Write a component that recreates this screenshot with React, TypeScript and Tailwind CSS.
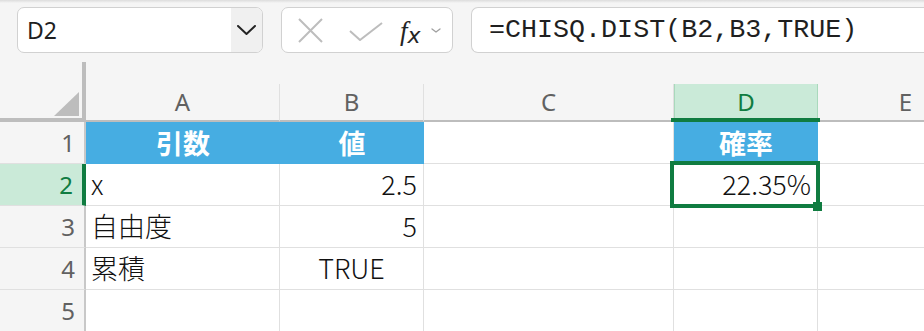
const UI_FONT = "font-['Noto_Sans','Open_Sans',sans-serif]";
const CELL_FONT = "font-['Noto_Sans_CJK_JP','Noto_Sans',sans-serif]";

type Cell = {
  text?: string;
  align?: 'left' | 'right' | 'center';
  header?: boolean;
};

const COLS = [
  { id: 'A', w: 'w-[194px] shrink-0' },
  { id: 'B', w: 'w-[144px] shrink-0' },
  { id: 'C', w: 'w-[250px] shrink-0' },
  { id: 'D', w: 'w-[144px] shrink-0' },
  { id: 'E', w: 'w-[176px] shrink-0' },
];

const ROWS: Cell[][] = [
  [{ text: '引数', align: 'center', header: true }, { text: '値', align: 'center', header: true }, {}, { text: '確率', align: 'center', header: true }, {}],
  [{ text: 'x' }, { text: '2.5', align: 'right' }, {}, { text: '22.35%', align: 'right' }, {}],
  [{ text: '自由度' }, { text: '5', align: 'right' }, {}, {}, {}],
  [{ text: '累積' }, { text: 'TRUE', align: 'center' }, {}, {}, {}],
  [{}, {}, {}, {}, {}],
];

function Chevron({ w, h, color, sw }: { w: number; h: number; color: string; sw: number }) {
  return (
    <svg width={w} height={h} viewBox={`0 0 ${w} ${h}`} fill="none">
      <polyline points={`1,1 ${w / 2},${h - 1} ${w - 1},1`} stroke={color} strokeWidth={sw} strokeLinecap="round" strokeLinejoin="round" />
    </svg>
  );
}

function Toolbar() {
  return (
    <div className="relative h-[62px] bg-[#f5f5f5] flex items-start pt-[7px] pl-[17px]">
      <div className="absolute top-0 left-0 right-0 h-[3px] bg-gradient-to-b from-[#dcdcdc] to-[#f5f5f5]" />
      {/* name box */}
      <div className="w-[246px] h-[46px] rounded-[7px] border-[1.5px] border-[#d1d1d1] bg-white flex overflow-hidden">
        <div className={`flex-1 flex items-center pl-[9px] text-[23px] text-[#1f1f1f] ${UI_FONT}`}>D2</div>
        <div className="w-[31px] bg-[#f0f0f0] flex items-center justify-center">
          <Chevron w={19} h={10} color="#242424" sw={2} />
        </div>
      </div>
      {/* cancel / enter / fx */}
      <div className="ml-[18px] w-[172px] h-[46px] rounded-[7px] border-[1.5px] border-[#d1d1d1] bg-white flex items-center">
        <svg className="ml-[16px]" width="25" height="25" viewBox="0 0 25 25" fill="none">
          <path d="M1 1 L24 24 M24 1 L1 24" stroke="#bdbdbd" strokeWidth="2" />
        </svg>
        <svg className="ml-[26px] mt-[2px]" width="34" height="19" viewBox="0 0 34 19" fill="none">
          <path d="M1 9 L11 18 L33 1" stroke="#bdbdbd" strokeWidth="2" />
        </svg>
        <span className="ml-[17px] mt-[2px] text-[27px] leading-none text-[#242424] italic font-['Liberation_Serif',serif]">
          f<span className="text-[22px] relative top-[3px] font-['DejaVu_Sans',sans-serif] font-light">x</span>
        </span>
        <div className="ml-[10px]">
          <Chevron w={10} h={5} color="#a0a0a0" sw={1.3} />
        </div>
      </div>
      {/* formula bar */}
      <div className="ml-[18px] flex-1 h-[46px] rounded-l-[7px] border-[1.5px] border-r-0 border-[#d1d1d1] bg-white flex items-center pl-[17px]">
        <span className="text-[26.7px] leading-none text-[#1f1f1f] font-['Liberation_Mono',monospace]">
          =CHISQ.DIST(B2,B3,TRUE)
        </span>
      </div>
    </div>
  );
}

function ColumnHeaders() {
  return (
    <div className="flex h-[60px] bg-[#f5f5f5]">
      <div className="relative w-[86px] shrink-0 h-full border-r-[4px] border-b-[4px] border-[#bdbdbd]">
        <svg className="absolute left-[54px] top-[30px]" width="25" height="24" viewBox="0 0 25 24">
          <polygon points="25,0 25,24 0,24" fill="#bdbdbd" />
        </svg>
      </div>
      {COLS.map((c) => {
        const sel = c.id === 'D';
        return (
          <div key={c.id} className={`${c.w} h-full flex flex-col`}>
            <div className="h-[22px]" />
            <div
              className={`relative flex-1 flex items-center justify-center text-[24px] ${UI_FONT} border-b-[2px] border-[#bdbdbd] border-r ${
                sel ? 'bg-[#caead8] text-[#107c41] border-r-[#a9d9bc] border-l border-l-[#a9d9bc]' : 'text-[#616161] border-r-[#e0e0e0]'
              }`}
            >
              {c.id}
              {sel && <div className="absolute z-10 left-[-4px] right-[-3px] bottom-[-2px] h-[4px] bg-[#107c41]" />}
            </div>
          </div>
        );
      })}
    </div>
  );
}

function Row({ n, cells }: { n: number; cells: Cell[] }) {
  const rowSel = n === 2;
  return (
    <div className="flex h-[42px]">
      <div
        className={`w-[86px] shrink-0 flex items-center justify-end pr-[9px] text-[24px] ${UI_FONT} border-b border-b-[#e0e0e0] ${
          rowSel
            ? 'bg-[#caead8] text-[#107c41] border-r-[4px] border-r-[#107c41]'
            : 'bg-[#f5f5f5] text-[#616161] border-r-[2px] border-r-[#c8c8c8]'
        }`}
      >
        {n}
      </div>
      {cells.map((cell, i) => {
        const col = COLS[i];
        const active = n === 2 && col.id === 'D';
        const align =
          cell.align === 'right' ? 'justify-end pr-[6px]' : cell.align === 'center' ? 'justify-center' : 'justify-start pl-[5px]';
        return (
          <div
            key={col.id}
            className={`relative ${col.w} flex items-center ${align} text-[27px] ${CELL_FONT} ${
              cell.header
                ? 'bg-[#46ade2] text-white font-bold'
                : 'bg-white text-[#111] font-light border-b border-b-[#e0e0e0]'
            } ${cell.header ? '' : 'border-r border-r-[#e0e0e0]'}`}
          >
            {cell.text}
            {active && (
              <>
                <div className="absolute z-10 left-[-4px] top-[-3px] right-[-3px] bottom-[-3px] border-[4px] border-[#107c41] pointer-events-none" />
                <div className="absolute z-10 right-[-5px] bottom-[-6px] w-[9px] h-[9px] bg-[#107c41]" />
              </>
            )}
          </div>
        );
      })}
    </div>
  );
}

export default function App() {
  return (
    <div className="w-[924px] h-[331px] overflow-hidden bg-white">
      <Toolbar />
      <ColumnHeaders />
      {ROWS.map((cells, i) => (
        <Row key={i} n={i + 1} cells={cells} />
      ))}
    </div>
  );
}
